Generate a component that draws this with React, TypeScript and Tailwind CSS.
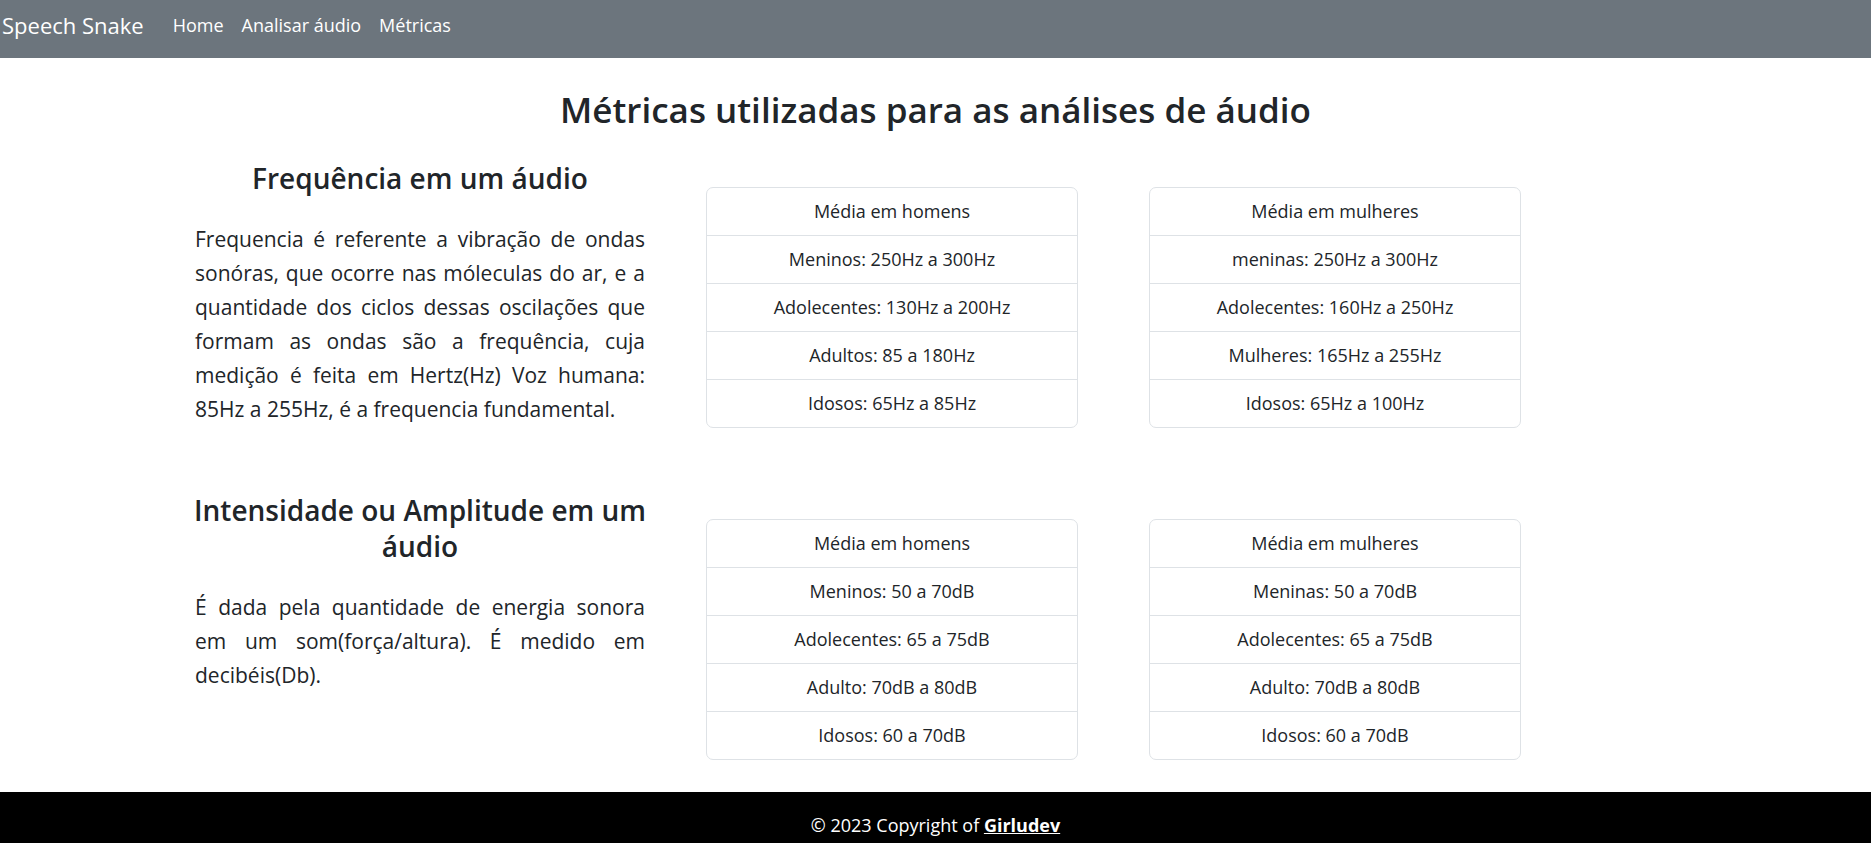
type Section = {
  title: string;
  text: string;
  cards: string[][];
};

const links = ["Home", "Analisar áudio", "Métricas"];

const sections: Section[] = [
  {
    title: "Frequência em um áudio",
    text: "Frequencia é referente a vibração de ondas sonóras, que ocorre nas móleculas do ar, e a quantidade dos ciclos dessas oscilações que formam as ondas são a frequência, cuja medição é feita em Hertz(Hz) Voz humana: 85Hz a 255Hz, é a frequencia fundamental.",
    cards: [
      ["Média em homens", "Meninos: 250Hz a 300Hz", "Adolecentes: 130Hz a 200Hz", "Adultos: 85 a 180Hz", "Idosos: 65Hz a 85Hz"],
      ["Média em mulheres", "meninas: 250Hz a 300Hz", "Adolecentes: 160Hz a 250Hz", "Mulheres: 165Hz a 255Hz", "Idosos: 65Hz a 100Hz"],
    ],
  },
  {
    title: "Intensidade ou Amplitude em um áudio",
    text: "É dada pela quantidade de energia sonora em um som(força/altura). É medido em decibéis(Db).",
    cards: [
      ["Média em homens", "Meninos: 50 a 70dB", "Adolecentes: 65 a 75dB", "Adulto: 70dB a 80dB", "Idosos: 60 a 70dB"],
      ["Média em mulheres", "Meninas: 50 a 70dB", "Adolecentes: 65 a 75dB", "Adulto: 70dB a 80dB", "Idosos: 60 a 70dB"],
    ],
  },
];

function Navbar() {
  return (
    <nav className="flex h-[58px] items-center bg-[#6c757d] pb-2 pl-0.5 text-white">
      <a href="#" className="mr-5 text-[22px]">
        Speech Snake
      </a>
      <ul className="flex text-[18px]">
        {links.map((label) => (
          <li key={label}>
            <a href="#" className="px-[9px]">
              {label}
            </a>
          </li>
        ))}
      </ul>
    </nav>
  );
}

function RangeCard({ rows }: { rows: string[] }) {
  return (
    <ul className="w-[372px] max-w-full divide-y divide-[#dee2e6] rounded-[7px] border border-[#dee2e6] text-center text-[18px] leading-[47px]">
      {rows.map((row) => (
        <li key={row}>{row}</li>
      ))}
    </ul>
  );
}

function MetricSection({ section }: { section: Section }) {
  return (
    <section className="flex flex-wrap items-start">
      <div className="w-[460px] max-w-full">
        <h2 className="text-center text-[28px] leading-9 font-semibold">{section.title}</h2>
        <p className="mt-[26px] px-[5px] text-justify text-[21px] leading-[34px]">{section.text}</p>
      </div>
      <div className="flex flex-wrap gap-[71px] pt-[27px] pl-14">
        {section.cards.map((rows) => (
          <RangeCard key={rows[0]} rows={rows} />
        ))}
      </div>
    </section>
  );
}

export default function App() {
  return (
    <div className="flex min-h-screen flex-col bg-white font-['Open_Sans','Noto_Sans',sans-serif] text-[#212529]">
      <Navbar />
      <main className="pt-7">
        <h1 className="text-center text-[35px] leading-12 font-semibold">
          Métricas utilizadas para as análises de áudio
        </h1>
        <div className="mx-auto mt-[26px] flex max-w-[1491px] flex-col gap-16">
          {sections.map((section) => (
            <MetricSection key={section.title} section={section} />
          ))}
        </div>
      </main>
      <footer className="mt-8 flex-1 bg-black pt-5 text-center text-[18px] leading-[27px] text-white">
        © 2023 Copyright of{" "}
        <a href="#" className="font-bold underline">
          Girludev
        </a>
      </footer>
    </div>
  );
}
